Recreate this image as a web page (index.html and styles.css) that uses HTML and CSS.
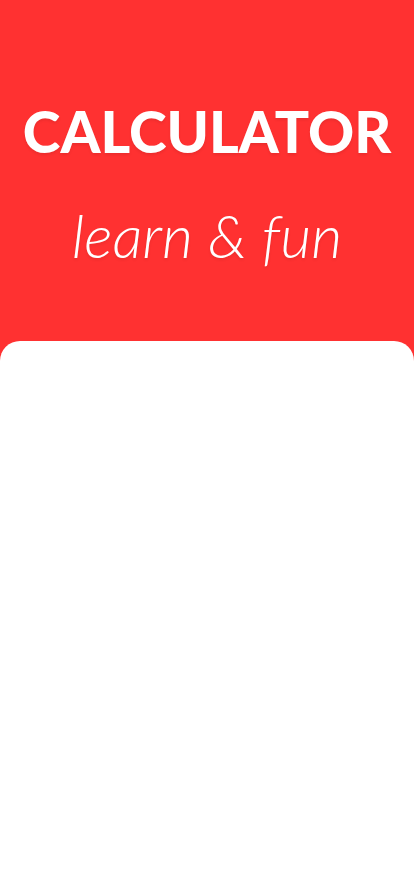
FILE: index.html
```html
<!DOCTYPE html>
<html lang="en">
<head>
<meta charset="utf-8">
<meta name="viewport" content="width=device-width, initial-scale=1">
<title>Calculator</title>
<link rel="stylesheet" href="styles.css">
</head>
<body>
<header class="hero">
<h1 class="title">CALCULATOR</h1>
<p class="tagline">learn &amp; fun</p>
</header>
<main class="sheet"></main>
</body>
</html>
```
FILE: styles.css
```css
* {
  box-sizing: border-box;
}

body {
  margin: 0;
  min-height: 100vh;
  display: flex;
  flex-direction: column;
  background: #ff3131;
  color: #fff;
  text-shadow: 0 2px 3px rgba(0, 0, 0, 0.08);
}

.hero {
  padding: 95px 16px 70px;
  text-align: center;
}

.title {
  margin: 0;
  font: 900 57px/72px Lato, sans-serif;
}

.tagline {
  margin: 32px 0 0;
  font: italic 300 60px/72px Lato, cursive;
}

.sheet {
  flex: 1;
  background: #fff;
  border-radius: 20px 20px 0 0;
}
```
